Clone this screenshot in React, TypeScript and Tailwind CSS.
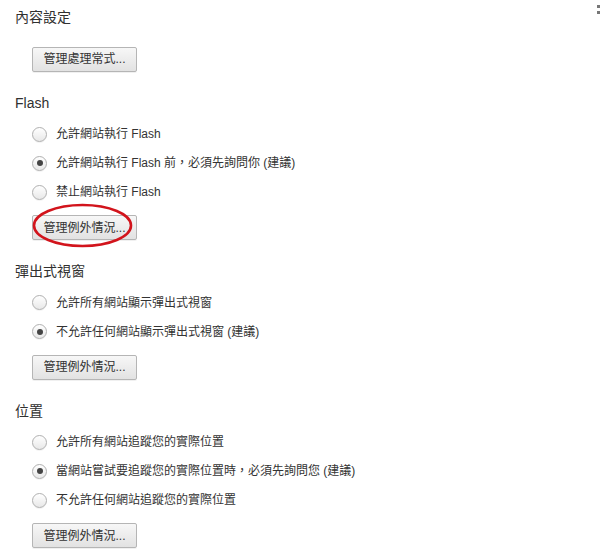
import React from "react";

const font = {
  fontFamily: '"Liberation Sans", "Noto Sans CJK TC", sans-serif',
};

type Option = { label: string; checked?: boolean };

const sections: { title: string; options: Option[]; circled?: boolean }[] = [
  {
    title: "Flash",
    circled: true,
    options: [
      { label: "允許網站執行 Flash" },
      { label: "允許網站執行 Flash 前，必須先詢問你 (建議)", checked: true },
      { label: "禁止網站執行 Flash" },
    ],
  },
  {
    title: "彈出式視窗",
    options: [
      { label: "允許所有網站顯示彈出式視窗" },
      { label: "不允許任何網站顯示彈出式視窗 (建議)", checked: true },
    ],
  },
  {
    title: "位置",
    options: [
      { label: "允許所有網站追蹤您的實際位置" },
      { label: "當網站嘗試要追蹤您的實際位置時，必須先詢問您 (建議)", checked: true },
      { label: "不允許任何網站追蹤您的實際位置" },
    ],
  },
];

// grey chrome-style push button
const Button = ({ label, circled }: { label: string; circled?: boolean }) => {
  return (
    <div className="relative ml-[17px] w-fit">
      <button className="h-[25px] w-[105px] rounded-[2px] border border-[#b5b5b5] bg-gradient-to-b from-[#f7f7f7] to-[#e2e2e2] text-[12px] leading-none text-[#333] shadow-[0_1px_0_rgba(0,0,0,0.06)]">
        {label}
      </button>
      {circled && (
        <svg
          className="pointer-events-none absolute left-[-2px] top-[-12px]"
          width="106"
          height="46"
          viewBox="0 0 106 46"
        >
          <ellipse
            cx="52.5"
            cy="22.5"
            rx="48.5"
            ry="20.5"
            fill="none"
            stroke="#d2141c"
            strokeWidth="2.6"
          />
        </svg>
      )}
    </div>
  );
};

const Radio = ({ checked }: { checked?: boolean }) => {
  return (
    <span className="flex h-[15px] w-[15px] items-center justify-center rounded-full border border-[#b0b0b0] bg-gradient-to-b from-white to-[#e8e8e8] shadow-[0_1px_0_rgba(0,0,0,0.05)]">
      {checked && <span className="h-[6px] w-[6px] rounded-full bg-[#444]" />}
    </span>
  );
};

export default function App() {
  return (
    <div
      className="relative flex min-h-[557px] w-[600px] flex-col bg-white pl-[15px] text-[#333]"
      style={font}
    >
      {/* tiny marks in the top right corner */}
      <span className="absolute right-0 top-[5px] h-[3px] w-[3px] bg-[#777]" />
      <span className="absolute right-0 top-[11px] h-[3px] w-[3px] bg-[#777]" />

      <h1 className="mt-[7px] text-[14px] leading-[20px] text-[#303030]">內容設定</h1>
      <div className="mt-[19px]">
        <Button label="管理處理常式..." />
      </div>

      {sections.map((s) => (
        <div key={s.title} className="flex flex-col">
          <h2 className="mt-[21px] text-[14px] leading-[20px] text-[#303030]">{s.title}</h2>
          <div className="mt-[7px] flex flex-col">
            {s.options.map((o) => (
              <label key={o.label} className="flex h-[29px] items-center gap-[9px] pl-[17px] text-[12px]">
                <Radio checked={o.checked} />
                <span>{o.label}</span>
              </label>
            ))}
          </div>
          <div className="mt-[8px]">
            <Button label="管理例外情況..." circled={s.circled} />
          </div>
        </div>
      ))}
    </div>
  );
}
